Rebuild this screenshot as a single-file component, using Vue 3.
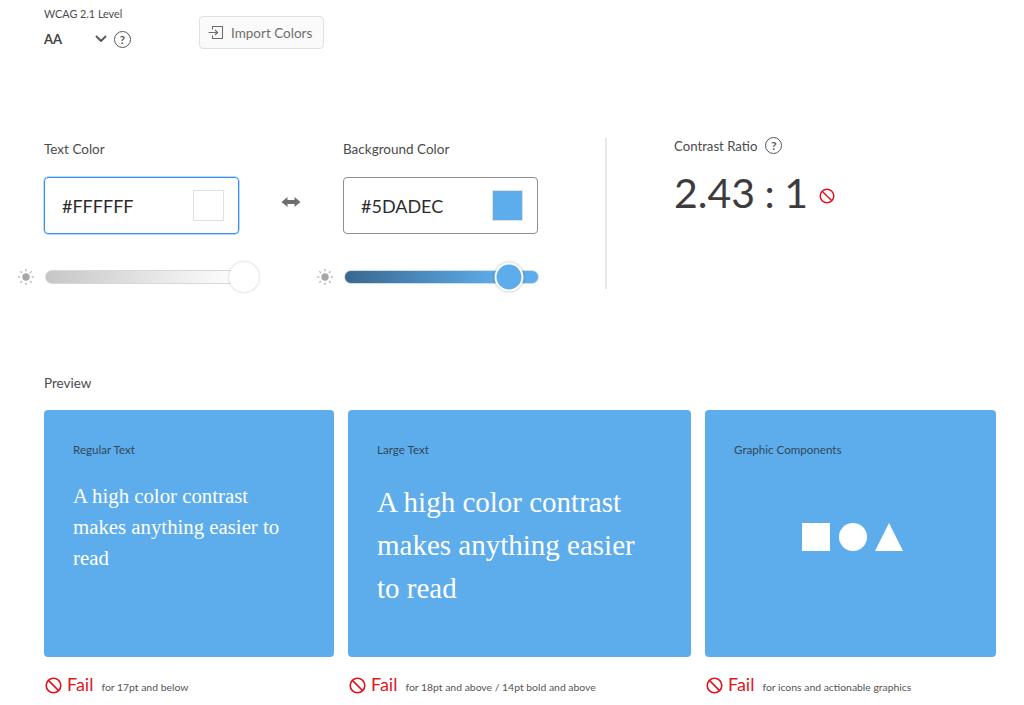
<script setup>
const cards = [
  { cls: 'regular', title: 'Regular Text', note: 'for 17pt and below' },
  { cls: 'large', title: 'Large Text', note: 'for 18pt and above / 14pt bold and above' },
  { cls: 'graphic', title: 'Graphic Components', note: 'for icons and actionable graphics' }
]
const rays = [0, 45, 90, 135, 180, 225, 270, 315]
</script>

<template>
  <div class="page">
    <header class="top">
      <div class="level">
        <div class="label small">WCAG 2.1 Level</div>
        <div class="level-row">
          <span class="aa">AA</span>
          <svg class="chev" width="12" height="8" viewBox="0 0 12 8"><path d="M1.5 1.5 6 6l4.5-4.5" fill="none" stroke="#555" stroke-width="1.8" stroke-linecap="round" stroke-linejoin="round"/></svg>
          <span class="help">?</span>
        </div>
      </div>
      <button class="import">
        <svg width="16" height="16" viewBox="0 0 16 16" fill="none" stroke="#6e6e6e" stroke-width="1.1"><path d="M4.5 4.5V1.5h10v12h-10v-3"/><path d="M0.5 7.5h9M7 5l2.7 2.5L7 10"/></svg>
        <span>Import Colors</span>
      </button>
    </header>

    <section class="colors">
      <div class="field">
        <div class="label">Text Color</div>
        <div class="input focus">
          <span>#FFFFFF</span>
          <i class="swatch white"></i>
        </div>
        <div class="slider-row">
          <svg class="sun" width="18" height="18" viewBox="0 0 18 18"><circle cx="9" cy="9" r="3.7" fill="#a6a6a6"/><rect v-for="r in rays" :key="r" x="8.3" y="1" width="1.4" height="2.4" fill="#bdbdbd" :transform="`rotate(${r} 9 9)`"/></svg>
          <div class="track track-white"><b class="thumb thumb-white"></b></div>
        </div>
      </div>
      <svg class="swap" width="20" height="12" viewBox="0 0 20 12"><path d="M0.5 6 6.5 1v3h7V1l6 5-6 5V8h-7v3z" fill="#6e6e6e"/></svg>
      <div class="field">
        <div class="label">Background Color</div>
        <div class="input">
          <span>#5DADEC</span>
          <i class="swatch blue"></i>
        </div>
        <div class="slider-row">
          <svg class="sun" width="18" height="18" viewBox="0 0 18 18"><circle cx="9" cy="9" r="3.7" fill="#a6a6a6"/><rect v-for="r in rays" :key="r" x="8.3" y="1" width="1.4" height="2.4" fill="#bdbdbd" :transform="`rotate(${r} 9 9)`"/></svg>
          <div class="track track-blue"><b class="thumb thumb-blue"></b></div>
        </div>
      </div>
      <div class="ratio">
        <div class="ratio-head"><span>Contrast Ratio</span><span class="help">?</span></div>
        <div class="ratio-value">
          <span>2.43 : 1</span>
          <svg class="no" width="16" height="16" viewBox="0 0 16 16" fill="none" stroke="#e1141e" stroke-width="1.5"><circle cx="8" cy="8" r="6.8"/><path d="M3.2 3.2l9.6 9.6"/></svg>
        </div>
      </div>
    </section>

    <div class="label preview-label">Preview</div>
    <section class="cards">
      <div v-for="c in cards" :key="c.cls" class="col" :class="c.cls">
        <div class="card">
          <div class="card-title">{{ c.title }}</div>
          <p v-if="c.cls !== 'graphic'" class="sample">A high color contrast makes anything easier to read</p>
          <div v-else class="shapes">
            <i class="sq"></i><i class="ci"></i>
            <svg width="28" height="28" viewBox="0 0 28 28"><path d="M14 0 28 28H0z" fill="#fff"/></svg>
          </div>
        </div>
        <div class="result">
          <svg width="17" height="17" viewBox="0 0 17 17" fill="none" stroke="#e1141e" stroke-width="1.6"><circle cx="8.5" cy="8.5" r="7.3"/><path d="M3.4 3.4l10.2 10.2"/></svg>
          <span class="fail">Fail</span>
          <span class="note">{{ c.note }}</span>
        </div>
      </div>
    </section>
  </div>
</template>

<style>
html, body { margin: 0; background: #fff; }
</style>

<style scoped>
.page {
  width: 1024px;
  height: 705px;
  box-sizing: border-box;
  padding: 0 28px 0 44px;
  overflow: hidden;
  font-family: "Lato", "Open Sans", sans-serif;
  color: #4b4b4b;
}
.top { display: flex; height: 138px; align-items: flex-start; padding-top: 6px; box-sizing: border-box; }
.level { width: 155px; }
.label { font-size: 13.5px; line-height: 16px; color: #4b4b4b; }
.label.small { font-size: 10.8px; line-height: 15px; }
.level-row { display: flex; align-items: center; margin-top: 8px; height: 20px; }
.aa { font-size: 13px; font-weight: 700; width: 51px; color: #444; }
.chev { margin-right: 7px; }
.help {
  width: 17px; height: 17px; box-sizing: border-box; border: 1.2px solid #555; border-radius: 50%;
  display: inline-flex; align-items: center; justify-content: center; font-size: 11.5px; font-weight: 700; color: #555;
}
.import {
  margin-top: 10px; width: 125px; height: 33px; padding: 0 0 0 8px; display: flex; align-items: center; gap: 7px;
  background: #fafafa; border: 1px solid #e1e1e1; border-radius: 4px; font: inherit; font-size: 13.5px; color: #6e6e6e;
}
.colors { display: flex; height: 237px; align-items: flex-start; padding-top: 3px; box-sizing: border-box; }
.field { width: 195px; }
.input {
  margin-top: 20px; height: 57px; box-sizing: border-box; border: 1px solid #8e8e8e; border-radius: 4px;
  display: flex; align-items: center; justify-content: space-between; padding: 0 14px 0 17px;
  font-size: 18px; color: #2c2c2c;
}
.input.focus { border-color: #378ef0; box-shadow: 0 0 0 .5px #7fb6f5; }
.swatch { width: 31px; height: 31px; box-sizing: border-box; border: 1px solid #e1e1e1; display: block; }
.swatch.white { background: #fff; }
.swatch.blue { background: #5dadec; }
.slider-row { display: flex; align-items: center; margin: 29px -1px 0 -27px; height: 28px; }
.sun { flex: none; margin-right: 10px; }
.track { position: relative; flex: 1; height: 14px; border-radius: 7px; box-sizing: border-box; border: 1px solid #d8d8d8; }
.track-white { background: linear-gradient(90deg, #c6c6c6, #fff); }
.track-blue { background: linear-gradient(90deg, #38688f, #5dadec 80%); border-color: #cfdde8; }
.thumb { position: absolute; top: 50%; border-radius: 50%; box-sizing: border-box; transform: translate(-50%, -50%); }
.thumb-white { left: 198px; width: 30px; height: 30px; background: #fff; box-shadow: 0 0 3px rgba(0,0,0,.22); }
.thumb-blue { left: 164px; width: 29px; height: 29px; background: #5dadec; border: 2px solid #fff; box-shadow: 0 0 3px rgba(0,0,0,.3); }
.swap { margin: 55px 42px 0 42px; flex: none; }
.ratio { margin-left: 67px; padding-left: 67px; border-left: 2px solid #e8e8e8; height: 151px; margin-top: -3px; box-sizing: border-box; }
.ratio-head { display: flex; align-items: center; gap: 8px; font-size: 13.2px; height: 17px; margin-top: -1px; }
.ratio-value { display: flex; align-items: center; gap: 11px; font-size: 41px; word-spacing: -1px; line-height: 56px; color: #3c3c3c; margin-top: 11px; }
.no { margin-top: 6px; }
.preview-label { height: 35px; }
.cards { display: flex; gap: 14px; }
.col { flex: none; }
.regular { width: 290px; }
.graphic { width: 291px; }
.large { width: 343px; }
.card { height: 246.5px; background: #5dadec; border-radius: 4px; box-sizing: border-box; padding: 32px 29px 0; color: #fff; }
.card-title { font-size: 11.6px; line-height: 16px; color: #33475a; }
.sample { margin: 0; font-family: "Liberation Serif", serif; color: #fff; }
.regular .sample { font-size: 20.8px; line-height: 31px; margin-top: 22px; }
.large .sample { font-size: 29px; line-height: 43px; margin-top: 23px; }
.shapes { display: flex; gap: 8.5px; justify-content: center; margin: 65px 0 0 4px; }
.sq { width: 28px; height: 28px; background: #fff; display: block; }
.ci { width: 28px; height: 28px; background: #fff; border-radius: 50%; display: block; }
.result { display: flex; align-items: baseline; margin-top: 16.5px; height: 20px; }
.result svg { align-self: center; margin: 4px 5px 0 1px; flex: none; }
.fail { font-size: 18px; color: #e1141e; margin-right: 8px; }
.note { font-size: 10.4px; color: #555; }
</style>
